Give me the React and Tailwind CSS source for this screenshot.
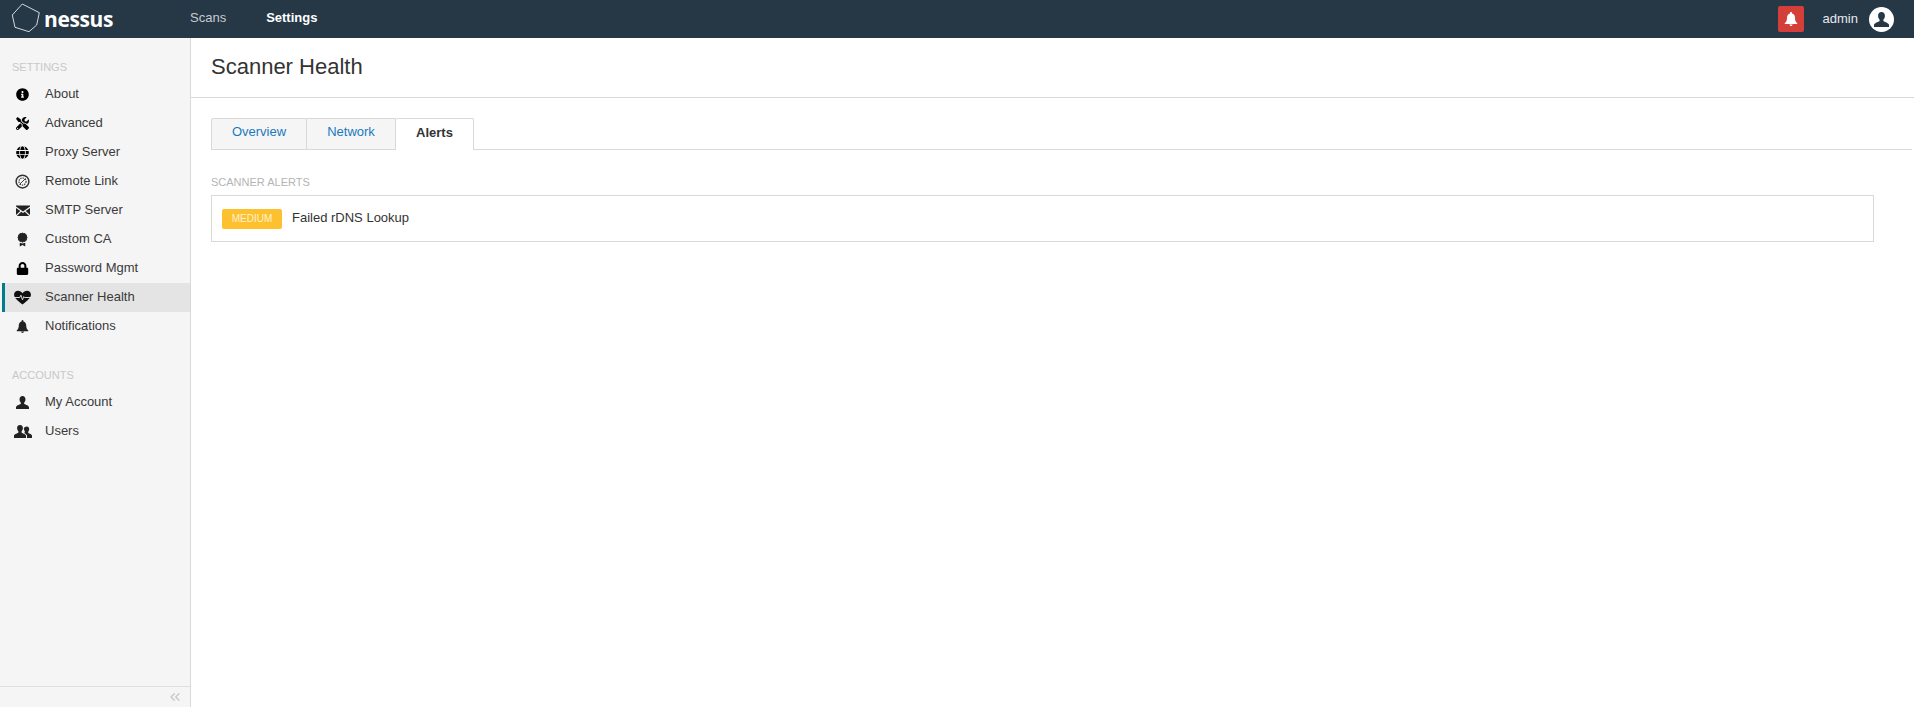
import React from 'react';
import { FaGlobe, FaInfoCircle, FaLock, FaTools } from 'react-icons/fa';
import { ChevronsLeft } from 'lucide-react';

function RemoteLinkIcon() {
  return (
    <svg viewBox="0 0 16 16" className="w-[15px] h-[15px]" fill="none" stroke="#333">
      <circle cx="8" cy="8" r="6.8" strokeWidth="1.6" />
      <circle cx="8" cy="8" r="3.8" strokeWidth="1.2" strokeDasharray="1.5 1" />
      <path d="M5 11l6-6" strokeWidth="1" />
    </svg>
  );
}

function EnvelopeIcon() {
  return (
    <svg viewBox="0 0 14 11" className="w-[14px] h-[11px]" fill="#222">
      <path d="M0 1.500L7 6.500l7-5V.5H0zM0 3v7l4.300-4zM14 3v7L9.700 6zM5.200 6.800L.8 11h12.400L8.800 6.800 7 8z" />
    </svg>
  );
}

function BadgeIcon() {
  return (
    <svg viewBox="0 0 14 18" className="w-[11px] h-[15px]" fill="#222">
      <path d="M7 0l1.500 1 1.800-.2.8 1.600 1.600.8-.2 1.800 1 1.500-1 1.500.2 1.800-1.600.8-.8 1.600-1.800-.2-1.500 1-1.500-1-1.800.2-.8-1.600-1.600-.8.2-1.800-1-1.500 1-1.500-.2-1.800 1.600-.8.8-1.600L5.500 1z" />
      <path d="M3.500 13v5l3.500-2 3.500 2v-5l-3.500 1.200z" />
    </svg>
  );
}

function HeartbeatIcon() {
  return (
    <svg viewBox="0 0 20 16" className="w-[19px] h-[15px]">
      <path d="M10 15.500C4 11 1 8.300 1 4.900 1 2.400 3 .8 5.200.8c2 0 3.700 1 4.800 2.700C11.100 1.800 12.800.8 14.800.8 17 .8 19 2.400 19 4.900c0 3.400-3 6.100-9 10.600z" fill="#111" />
      <path d="M0 8h7l1.300-2.500L10 10.500l1.300-3.500.8 1H20" fill="none" stroke="#e4e4e4" strokeWidth="1" />
    </svg>
  );
}

function BellIcon({ color = '#222', size = 13 }) {
  return (
    <svg viewBox="0 0 14 14" width={size} height={size} fill={color}>
      <path d="M7 0c.6 0 1 .4 1 1v.6c2 .5 3 2.200 3 4.400 0 2.600.8 4 2.200 5.300.3.300.1.700-.3.700H1.100c-.4 0-.6-.4-.3-.7C2.200 10 3 8.600 3 6c0-2.200 1-3.900 3-4.400V1c0-.6.400-1 1-1z" />
      <path d="M5.300 12.500h3.400C8.500 13.400 7.800 14 7 14s-1.500-.6-1.700-1.500z" />
    </svg>
  );
}

function PersonIcon({ color = '#222', size = 13 }) {
  return (
    <svg viewBox="0 0 14 14" width={size} height={size} fill={color}>
      <path d="M7 0c2 0 3.200 1.500 3.200 3.500 0 1.400-.5 2.800-1.400 3.600v1.300c0 .6 4.700 1.600 5.200 3.600v2H0v-2c.5-2 5.200-3 5.200-3.600V7.100C4.300 6.300 3.800 4.900 3.800 3.500 3.800 1.500 5 0 7 0z" />
    </svg>
  );
}

function UsersIcon() {
  return (
    <svg viewBox="0 0 18 13" className="w-[18px] h-[13px]" fill="#222">
      <path d="M6 0c1.800 0 2.900 1.300 2.900 3.100 0 1.200-.5 2.500-1.300 3.200v1.100c0 .6 4 1.400 4.400 3.200V13H0v-2.400c.4-1.800 4.400-2.600 4.400-3.200V6.300C3.600 5.600 3.100 4.300 3.100 3.100 3.100 1.300 4.200 0 6 0z" />
      <path d="M12.800 1.500c1.500 0 2.400 1.100 2.400 2.600 0 1-.4 2-1 2.700v1c0 .5 3.400 1.200 3.800 2.700V13h-5v-2.500c-.3-1.200-2-2-2.800-2.600.3-.3.600-.5.600-.7v-1c-.6-.7-1-1.700-1-2.700.3-1.200 1.600-2 3-2z" />
    </svg>
  );
}

function LogoMark() {
  return (
    <svg viewBox="0 0 32 32" className="w-[32px] h-[32px]" fill="none" stroke="#e6eaee" strokeWidth="0.9">
      <path d="M11.300 1L28.300 9.700 25.700 22 18 28.700 4 24.300 1.300 12z" />
    </svg>
  );
}

const settingsItems = [
  { label: 'About', icon: <FaInfoCircle size={13} /> },
  { label: 'Advanced', icon: <FaTools size={13} /> },
  { label: 'Proxy Server', icon: <FaGlobe size={13} /> },
  { label: 'Remote Link', icon: <RemoteLinkIcon /> },
  { label: 'SMTP Server', icon: <EnvelopeIcon /> },
  { label: 'Custom CA', icon: <BadgeIcon /> },
  { label: 'Password Mgmt', icon: <FaLock size={13} /> },
  { label: 'Scanner Health', icon: <HeartbeatIcon />, active: true },
  { label: 'Notifications', icon: <BellIcon /> },
];

const accountItems = [
  { label: 'My Account', icon: <PersonIcon /> },
  { label: 'Users', icon: <UsersIcon /> },
];

function NavItem({ item }) {
  return (
    <a
      className={
        'flex items-center h-[29px] ml-[2px] border-l-[3px] ' +
        (item.active ? 'border-[#007d8a] bg-[#e4e4e4]' : 'border-transparent')
      }
    >
      <span className="w-[40px] flex justify-center pl-[4px] pr-[9px]">{item.icon}</span>
      <span className="text-[13px] text-[#3a3a3a] pb-[1px]">{item.label}</span>
    </a>
  );
}

function SectionLabel({ children }) {
  return <div className="pl-[12px] text-[11px] leading-[16px] text-[#c8c8c8]">{children}</div>;
}

export default function App() {
  return (
    <div className="h-screen flex flex-col overflow-hidden bg-white font-['Liberation_Sans',Arial,sans-serif]">
      <header className="h-[38px] shrink-0 bg-[#263746] flex items-center">
        <div className="w-[190px] flex items-center pl-[11px]">
          <LogoMark />
          <span className="ml-[1px] text-[21px] leading-none font-bold text-white font-['Open_Sans',sans-serif] tracking-[-0.4px]">nessus</span>
        </div>
        <span className="text-[13px] text-[#c6ccd1] pb-[2px]">Scans</span>
        <span className="ml-[40px] text-[13px] font-bold text-white pb-[2px]">Settings</span>
        <div className="ml-auto flex items-center pr-[20px]">
          <span className="w-[26px] h-[26px] rounded-[2px] bg-[#d43f3a] flex items-center justify-center">
            <BellIcon color="#fff" size={14} />
          </span>
          <span className="ml-[19px] text-[13px] text-[#e6eaee] pb-[1px]">admin</span>
          <span className="ml-[11px] w-[25px] h-[25px] rounded-full bg-white flex items-center justify-center overflow-hidden">
            <PersonIcon color="#263746" size={15} />
          </span>
        </div>
      </header>

      <div className="flex-1 flex min-h-0">
        <aside className="w-[191px] shrink-0 bg-[#f5f5f5] border-r border-[#d9d9d9] flex flex-col">
          <div className="flex-1 pt-[21px]">
            <SectionLabel>SETTINGS</SectionLabel>
            <nav className="mt-[5px]">
              {settingsItems.map((item) => <NavItem key={item.label} item={item} />)}
            </nav>
            <div className="mt-[26px]">
              <SectionLabel>ACCOUNTS</SectionLabel>
            </div>
            <nav className="mt-[5px]">
              {accountItems.map((item) => <NavItem key={item.label} item={item} />)}
            </nav>
          </div>
          <div className="h-[21px] border-t border-[#e0e0e0] flex items-center justify-end pr-[7px] text-[#c4c8cc]">
            <ChevronsLeft size={16} />
          </div>
        </aside>

        <main className="flex-1 min-w-0">
          <div className="h-[60px] border-b border-[#d9d9d9] flex items-center pl-[20px] pb-[2px]">
            <h1 className="text-[22px] text-[#333]">Scanner Health</h1>
          </div>
          <div className="pl-[20px] pr-[2px] pt-[20px]">
            <div className="flex h-[32px] border-b border-[#d9d9d9]">
              <a className="w-[96px] h-[32px] flex items-center justify-center border border-[#d9d9d9] rounded-tl-[2px] bg-[#f5f5f5] text-[13px] text-[#1a7ac0] pb-[4px]">Overview</a>
              <a className="w-[89px] h-[32px] flex items-center justify-center border border-l-0 border-[#d9d9d9] bg-[#f5f5f5] text-[13px] text-[#1a7ac0] pb-[4px]">Network</a>
              <a className="w-[78px] h-[32px] flex items-center justify-center border border-l-0 border-b-0 border-[#d9d9d9] rounded-t-[2px] bg-white text-[13px] font-bold text-[#333] pb-[4px]">Alerts</a>
            </div>
            <div className="mt-[25px] text-[11px] leading-[14px] text-[#b4b4b4]">SCANNER ALERTS</div>
            <div className="mt-[6px] mr-[38px] h-[47px] border border-[#d9d9d9] flex items-center pl-[10px]">
              <span className="w-[60px] h-[20px] rounded-[2px] bg-[#fdc02f] flex items-center justify-center text-[10px] text-[#fff3d0]">MEDIUM</span>
              <span className="ml-[10px] text-[13px] text-[#333] pb-[1px]">Failed rDNS Lookup</span>
            </div>
          </div>
        </main>
      </div>
    </div>
  );
}
